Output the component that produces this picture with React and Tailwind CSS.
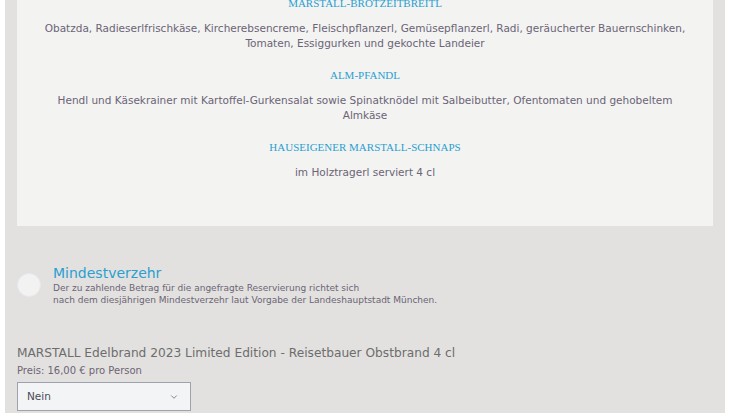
import { ChevronDown } from "lucide-react";

const sans = { fontFamily: '"DejaVu Sans", "Noto Sans", sans-serif' };

function Course({ title, children }) {
  return (
    <div className="mb-[17px]">
      <h3
        className="text-[11px] leading-[15px] text-[#2a9fd0] uppercase mb-[10px]"
        style={{ fontFamily: '"Liberation Serif", "DejaVu Serif", serif' }}
      >
        {title}
      </h3>
      <p className="text-[10.5px] leading-[15px] text-[#6b6475]">{children}</p>
    </div>
  );
}

export default function App() {
  return (
    <div className="bg-white px-[5px] min-h-[413px]" style={sans}>
      <div className="bg-[#e2e1df] px-[12px] pb-[40px]">
        <div className="bg-[#f3f3f2] text-center pb-[29px] -mt-[4px] px-[20px]">
          <Course title="Marstall-Brotzeitbreitl">
            Obatzda, Radieserlfrischkäse, Kircherebsencreme, Fleischpflanzerl, Gemüsepflanzerl, Radi, geräucherter Bauernschinken,
            <br />
            Tomaten, Essiggurken und gekochte Landeier
          </Course>
          <Course title="Alm-Pfandl">
            Hendl und Käsekrainer mit Kartoffel-Gurkensalat sowie Spinatknödel mit Salbeibutter, Ofentomaten und gehobeltem
            <br />
            Almkäse
          </Course>
          <Course title="Hauseigener Marstall-Schnaps">im Holztragerl serviert 4 cl</Course>
        </div>

        <div className="flex items-center gap-[12px] mt-[38px]">
          <div className="w-[24px] h-[24px] rounded-full bg-[#f2f2f3] border border-[#e8e8ec] shrink-0" />
          <div>
            <div className="text-[14px] leading-[18px] text-[#2a9fd0]">Mindestverzehr</div>
            <p className="text-[9px] leading-[12px] text-[#6b6475]">
              Der zu zahlende Betrag für die angefragte Reservierung richtet sich
              <br />
              nach dem diesjährigen Mindestverzehr laut Vorgabe der Landeshauptstadt München.
            </p>
          </div>
        </div>

        <div className="mt-[38px]">
          <div className="text-[12.2px] leading-[18px] text-[#6d6d6d]">
            MARSTALL Edelbrand 2023 Limited Edition - Reisetbauer Obstbrand 4 cl
          </div>
          <div className="text-[10px] leading-[14px] text-[#6d6475] mt-[2px]">Preis: 16,00 € pro Person</div>
          <div className="mt-[4px] w-[174px] h-[29px] border border-[#9ea3ab] bg-[#f3f4f6] flex items-center justify-between pl-[9px] pr-[11px]">
            <span className="text-[10.5px] text-[#4b4b55]">Nein</span>
            <ChevronDown size={10} className="text-[#6b7280]" />
          </div>
        </div>
      </div>
    </div>
  );
}
